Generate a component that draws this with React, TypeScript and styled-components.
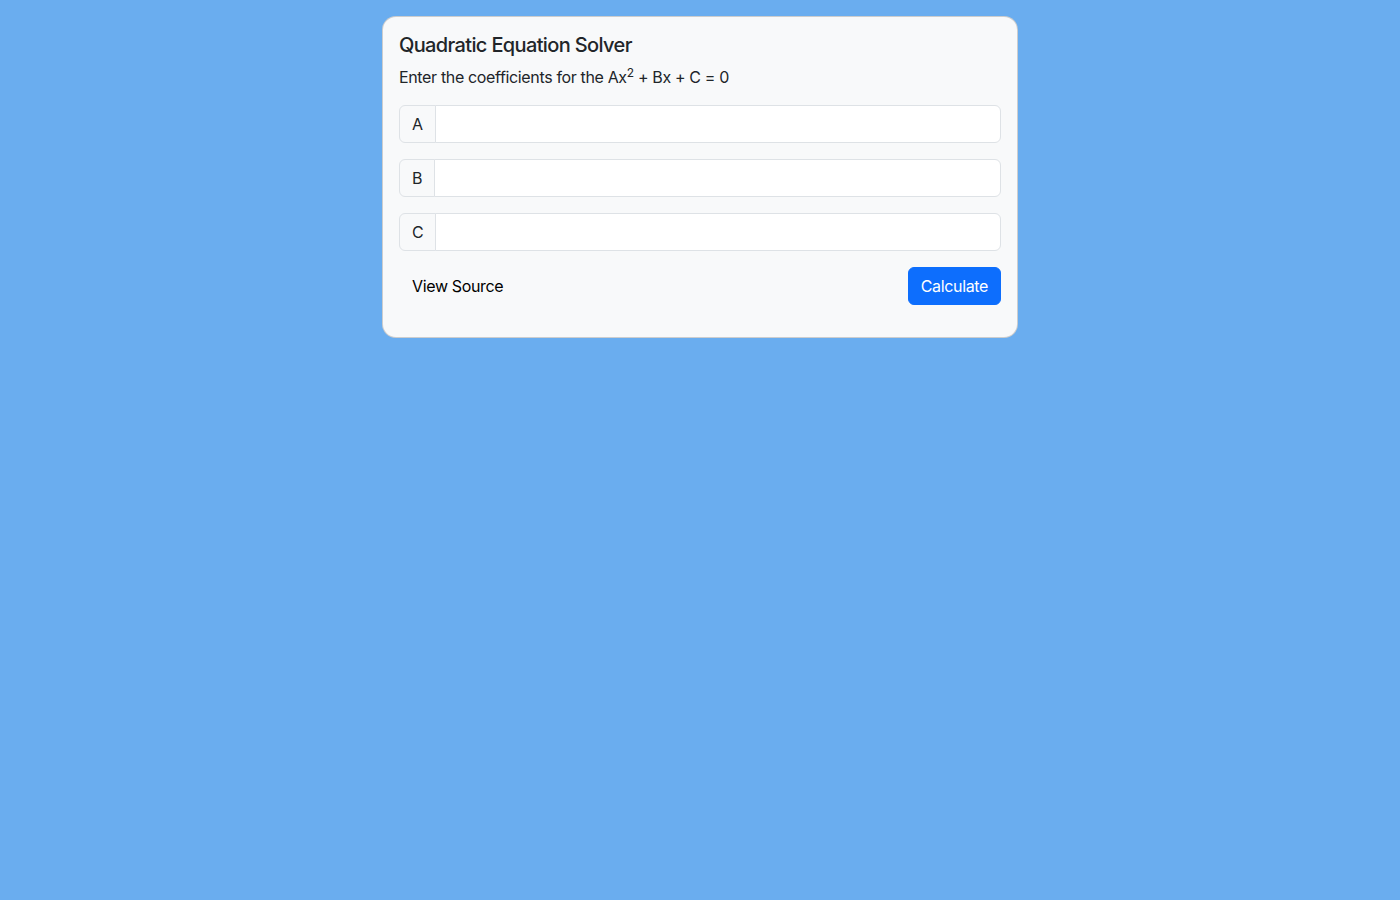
import React from "react";
import styled, { createGlobalStyle } from "styled-components";

const Global = createGlobalStyle`
  html, body { margin: 0; padding: 0; }
  body {
    background: #6aadef;
    font-family: Inter, "Noto Sans", "Liberation Sans", sans-serif;
    font-size: 16px;
    line-height: 1.5;
    letter-spacing: -0.022em;
    color: #212529;
    min-height: 900px;
  }
  * { box-sizing: border-box; }
`;

const Page = styled.div`
  display: flex;
  justify-content: center;
  padding-top: 16px;
`;

const Card = styled.div`
  width: 636px;
  background: #f8f9fa;
  border: 1px solid rgba(0, 0, 0, 0.175);
  border-radius: 14px;
  padding: 16px;
`;

const Title = styled.h5`
  margin: 0 0 8px;
  font-size: 20px;
  font-weight: 500;
  line-height: 1.2;
  letter-spacing: -0.032em;
  color: #212529;
`;

const Subtitle = styled.p`
  margin: 0 0 16px;
  font-size: 16px;
  line-height: 24px;
`;

const Sup = styled.sup`
  font-size: 0.75em;
  line-height: 0;
  position: relative;
  vertical-align: baseline;
  top: -0.5em;
`;

const InputGroup = styled.div`
  display: flex;
  align-items: stretch;
  height: 38px;
  margin-bottom: 16px;
`;

const Addon = styled.span`
  display: flex;
  align-items: center;
  padding: 6px 12px;
  font-size: 16px;
  background: #f8f9fa;
  border: 1px solid #dee2e6;
  border-radius: 6px 0 0 6px;
  color: #212529;
`;

const Input = styled.input`
  flex: 1;
  min-width: 0;
  margin-left: -1px;
  border: 1px solid #dee2e6;
  border-radius: 0 6px 6px 0;
  background: #fff;
  padding: 6px 12px;
  font: inherit;
  outline: none;
`;

const Actions = styled.div`
  display: flex;
  justify-content: space-between;
  align-items: center;
  margin-bottom: 16px;
`;

const Button = styled.button<{ $primary?: boolean }>`
  height: 38px;
  padding: 6px 12px;
  font-family: inherit;
  font-size: 16px;
  line-height: 24px;
  letter-spacing: inherit;
  border-radius: 6px;
  border: 1px solid ${(p) => (p.$primary ? "#0d6efd" : "transparent")};
  background: ${(p) => (p.$primary ? "#0d6efd" : "transparent")};
  color: ${(p) => (p.$primary ? "#fff" : "#000")};
  cursor: pointer;
`;

export default function App() {
  return (
    <>
      <Global />
      <Page>
        <Card>
          <Title>Quadratic Equation Solver</Title>
          <Subtitle>
            Enter the coefficients for the Ax<Sup>2</Sup> + Bx + C = 0
          </Subtitle>
          {["A", "B", "C"].map((l) => (
            <InputGroup key={l}>
              <Addon>{l}</Addon>
              <Input type="text" />
            </InputGroup>
          ))}
          <Actions>
            <Button>View Source</Button>
            <Button $primary>Calculate</Button>
          </Actions>
        </Card>
      </Page>
    </>
  );
}
